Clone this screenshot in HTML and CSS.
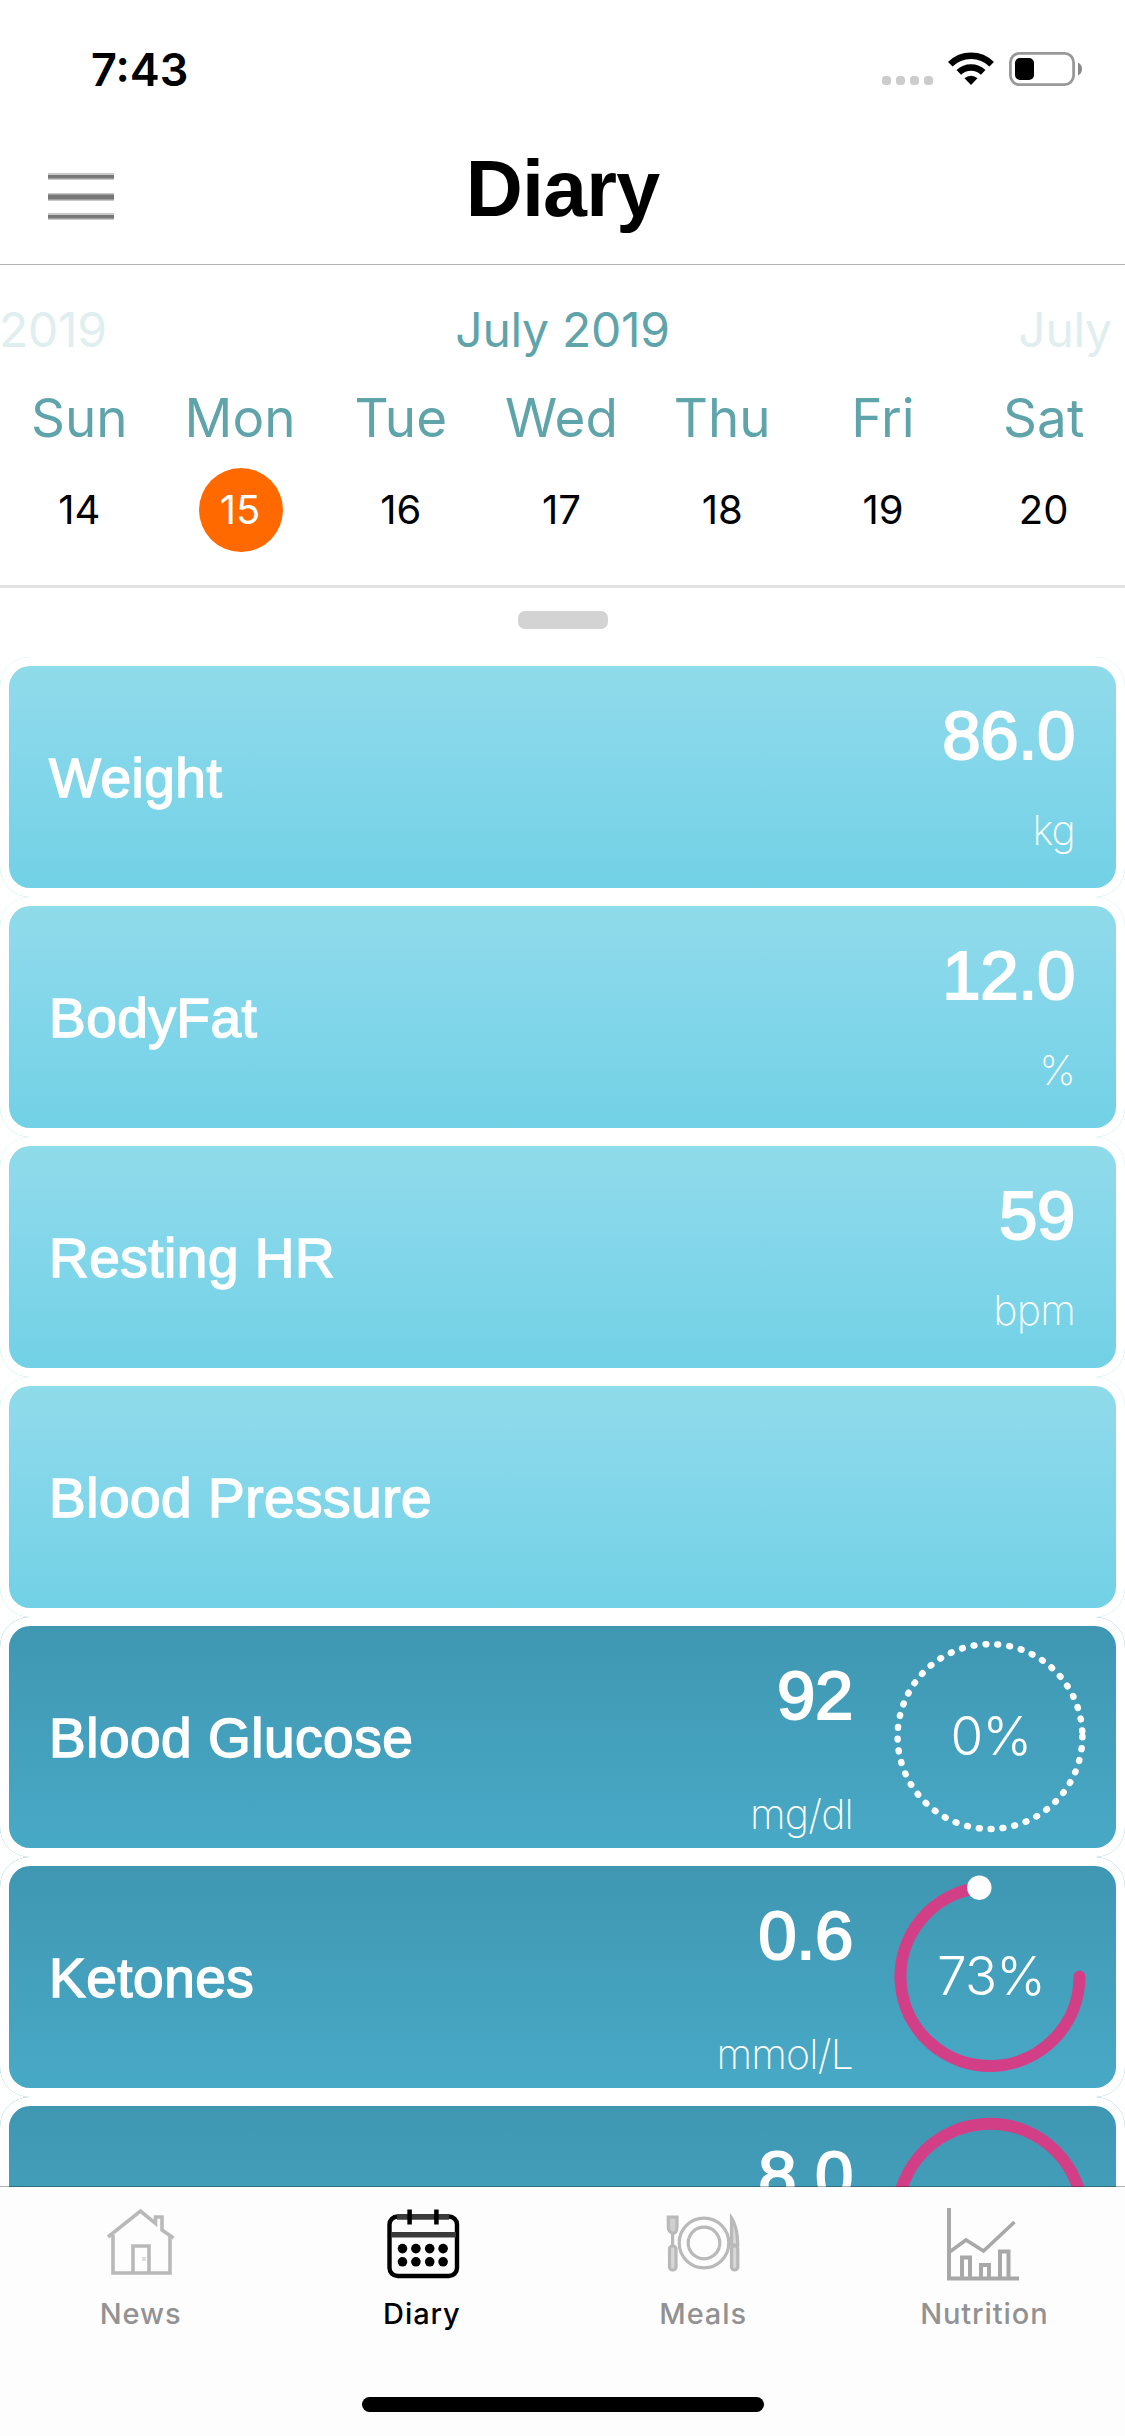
FILE: index.html
```
<!DOCTYPE html>
<html lang="en">
<head>
  <meta charset="UTF-8">
  <title>Diary</title>
  <link rel="stylesheet" href="styles.css">
</head>
<body>
  <div class="phone">
    <div class="status-bar">
      <span class="time">7:43</span>
      <svg class="status-icons" width="204" height="40" viewBox="880 48 204 40">
        <g fill="#ccc">
          <rect x="882" y="76" width="9" height="9" rx="3.5" />
          <rect x="896" y="76" width="9" height="9" rx="3.5" />
          <rect x="910" y="76" width="9" height="9" rx="3.5" />
          <rect x="924" y="76" width="9" height="9" rx="3.5" />
        </g>
        <g fill="none" stroke="#000" stroke-width="6.5">
          <path d="M950.3 64.2a29.5 29.5 0 0 1 41.4 0" />
          <path d="M958.8 72.4a17.5 17.5 0 0 1 24.4 0" />
        </g>
        <path d="M964.5 78.3a9.4 9.4 0 0 1 13 0L971 85z" />
        <rect x="1010.4" y="53.4" width="63.2" height="31.2" rx="9" fill="none" stroke="#999" stroke-width="2.8" />
        <rect x="1015" y="58" width="19" height="22" rx="5" />
        <path d="M1078 62.5q4 2 4 6.500t-4 6.500z" fill="#888" />
      </svg>
    </div>

    <div class="header">
      <svg class="menu-icon" width="66" height="50" viewBox="0 0 66 50">
        <g fill="#c9c9c9">
          <rect y="2" width="66" height="7" />
          <rect y="22" width="66" height="8" />
          <rect y="42" width="66" height="7" />
        </g>
        <g fill="#777">
          <rect y="4" width="66" height="3.500" />
          <rect y="23.500" width="66" height="5" />
          <rect y="44" width="66" height="3.500" />
        </g>
      </svg>
      <h1>Diary</h1>
    </div>

    <div class="calendar">
      <div class="months">
        <span class="month faded">July 2019</span>
        <span class="month">July 2019</span>
        <span class="month faded">July 2019</span>
      </div>
      <div class="week">
        <div class="day"><p class="day-name">Sun</p><p class="day-number">14</p></div>
        <div class="day"><p class="day-name">Mon</p><p class="day-number selected">15</p></div>
        <div class="day"><p class="day-name">Tue</p><p class="day-number">16</p></div>
        <div class="day"><p class="day-name">Wed</p><p class="day-number">17</p></div>
        <div class="day"><p class="day-name">Thu</p><p class="day-number">18</p></div>
        <div class="day"><p class="day-name">Fri</p><p class="day-number">19</p></div>
        <div class="day"><p class="day-name">Sat</p><p class="day-number">20</p></div>
      </div>
    </div>
    <div class="handle"></div>

    <div class="list">
      <div class="card">
        <h2>Weight</h2>
        <div class="reading"><p class="value">86.0</p><p class="unit">kg</p></div>
      </div>
      <div class="card">
        <h2>BodyFat</h2>
        <div class="reading"><p class="value">12.0</p><p class="unit">%</p></div>
      </div>
      <div class="card">
        <h2>Resting HR</h2>
        <div class="reading"><p class="value">59</p><p class="unit">bpm</p></div>
      </div>
      <div class="card">
        <h2>Blood Pressure</h2>
      </div>
      <div class="card dark">
        <h2>Blood Glucose</h2>
        <div class="reading"><p class="value">92</p><p class="unit">mg/dl</p></div>
        <svg class="ring" width="200" height="222" viewBox="0 0 200 222">
          <circle class="ring-dots" cx="100" cy="110.500" r="92.400" />
          <text x="101" y="129">0%</text>
        </svg>
      </div>
      <div class="card dark">
        <h2>Ketones</h2>
        <div class="reading"><p class="value">0.6</p><p class="unit">mmol/L</p></div>
        <svg class="ring" width="200" height="222" viewBox="0 0 200 222">
          <path class="ring-line" d="M189.500 110.500A89.500 89.500 0 1 1 88.800 21.700" />
          <circle cx="89.300" cy="21.700" r="12.200" fill="#fff" />
          <text x="101" y="129">73%</text>
        </svg>
      </div>
      <div class="card dark">
        <h2></h2>
        <div class="reading"><p class="value">8.0</p></div>
        <svg class="ring" width="200" height="222" viewBox="0 0 200 222">
          <circle class="ring-line" cx="100" cy="110.500" r="92.800" />
        </svg>
      </div>
    </div>

    <div class="tab-bar">
      <div class="tabs">
        <div class="tab">
          <svg width="76" height="76" viewBox="103 2206 76 76" fill="none" stroke="#b9b9b9" stroke-width="3.600">
            <path d="M108 2237l32.500-26 15 12.500v-6.500h6.500v13l11.500 8" />
            <path d="M113 2235v38h57v-38M133 2273v-27h16v27" />
            <path d="M144 2257v4" stroke="#dcdcdc" />
          </svg>
          <span>News</span>
        </div>
        <div class="tab active">
          <svg width="76" height="76" viewBox="384 2206 76 76" fill="none" stroke="#000">
            <rect x="389.500" y="2216.500" width="67.500" height="59.500" rx="8" stroke-width="4.400" />
            <path d="M397 2217h52M391 2234.800h65" stroke="#3a3a3a" stroke-width="5.500" />
            <path d="M409.600 2209.500v15M436.400 2209.500v15" stroke-width="4.500" />
            <g fill="#000" stroke="none">
              <circle cx="402.500" cy="2248.600" r="4.800" />
              <circle cx="415.900" cy="2248.600" r="4.800" />
              <circle cx="429.700" cy="2248.600" r="4.800" />
              <circle cx="443.100" cy="2248.600" r="4.800" />
              <circle cx="402.500" cy="2261.800" r="4.800" />
              <circle cx="415.900" cy="2261.800" r="4.800" />
              <circle cx="429.700" cy="2261.800" r="4.800" />
              <circle cx="443.100" cy="2261.800" r="4.800" />
            </g>
          </svg>
          <span>Diary</span>
        </div>
        <div class="tab">
          <svg width="76" height="76" viewBox="665 2206 76 76" fill="none" stroke="#b9b9b9" stroke-width="3.200">
            <circle cx="704" cy="2243" r="24.800" />
            <circle cx="704" cy="2243" r="15.800" />
            <path d="M668.300 2217v10q0 5 4.200 6t4.500-6v-10z" fill="#cfcfcf" />
            <path d="M672.600 2234v12" />
            <rect x="669.500" y="2246" width="6.500" height="24" rx="3" fill="#d8d8d8" />
            <path d="M731.500 2245v-27q6 9 6.300 27z" fill="#d8d8d8" />
            <rect x="731.500" y="2246" width="6.300" height="24" rx="3" fill="#d8d8d8" />
          </svg>
          <span>Meals</span>
        </div>
        <div class="tab">
          <svg width="76" height="76" viewBox="946 2206 76 76" fill="none" stroke="#a8a8a8" stroke-width="4">
            <path d="M949 2208v70.500h70" />
            <path d="M949.500 2252l16.500-12 17.500 11 31-29" stroke-width="3.600" />
            <path d="M962 2278v-20.500h8v20.500M981 2278v-13h8v13M1000 2278v-26.500h8.500v26.500" />
          </svg>
          <span>Nutrition</span>
        </div>
      </div>
      <div class="home-indicator"></div>
    </div>
  </div>
</body>
</html>
```
FILE: styles.css
```
* {
  box-sizing: border-box;
  margin: 0;
  padding: 0;
}

body {
  background: #fff;
  font-family: Inter, "Liberation Sans", sans-serif;
}

.phone {
  width: 1125px;
  height: 2436px;
  display: flex;
  flex-direction: column;
  overflow: hidden;
}

.status-bar {
  height: 132px;
  display: flex;
  justify-content: space-between;
  align-items: flex-start;
  padding: 48px 41px 0 91px;
}

.time {
  font-size: 45px;
  font-weight: 600;
  line-height: 43px;
}

.header {
  height: 133px;
  display: grid;
  grid-template-columns: 66px 1fr 66px;
  padding: 0 48px;
  border-bottom: 1px solid #b2b2b2;
}

.menu-icon {
  margin-top: 39px;
}

h1 {
  font-family: "Liberation Sans", sans-serif;
  font-size: 79px;
  line-height: 113px;
  letter-spacing: -0.8px;
  text-align: center;
}

.calendar {
  height: 323px;
  padding-top: 35px;
  border-bottom: 3px solid #e2e2e2;
}

.months {
  display: flex;
  justify-content: center;
}

.month {
  flex: none;
  width: 563px;
  text-align: center;
  color: #5fa4aa;
  font-size: 48px;
  line-height: 60px;
  letter-spacing: -0.3px;
}

.faded {
  color: #dfeeee;
}

.week {
  display: flex;
}

.day {
  flex: 1;
  display: flex;
  flex-direction: column;
  align-items: center;
}

.day-name {
  margin-top: 22px;
  padding-right: 2px;
  color: #5fa4aa;
  font-size: 53px;
  line-height: 72px;
}

.day-number {
  margin-top: 14px;
  width: 84px;
  height: 84px;
  padding-right: 2px;
  border-radius: 50%;
  text-align: center;
  font-size: 40px;
  line-height: 83px;
}

.selected {
  background: #ff6900;
  color: white;
}

.handle {
  width: 90px;
  height: 18px;
  margin: 23px auto 28px;
  border-radius: 7px;
  background: #d3d3d3;
  flex: none;
}

.list {
  flex: 1;
  min-height: 0;
  overflow: hidden;
}

.card {
  height: 240px;
  display: flex;
  border-radius: 30px;
  background: linear-gradient(#8fdbe9 9px, #8bd9eb 50px, #72d1e6 231px);
  box-shadow: inset 0 0 0 9px white;
  color: white;
  padding: 9px 50px 9px 49px;
}

.dark {
  background: linear-gradient(#3f97b2 9px, #48a9c6 231px);
  padding-right: 36px;
}

h2 {
  flex: 1;
  font-family: "Liberation Sans", sans-serif;
  font-weight: 400;
  font-size: 55px;
  line-height: 225px;
  letter-spacing: 0.5px;
  -webkit-text-stroke: 1.5px white;
}

.reading {
  text-align: right;
}

.value {
  margin-top: 30px;
  font-family: "Liberation Sans", sans-serif;
  font-size: 69px;
  line-height: 80px;
  letter-spacing: -0.4px;
  -webkit-text-stroke: 2px white;
}

.unit {
  margin-top: 24px;
  font-weight: 250;
  font-size: 41px;
  line-height: 60px;
  letter-spacing: -0.8px;
}

.dark .unit {
  margin-top: 48px;
}

.ring {
  margin-left: 37px;
  margin-right: -1px;
  flex: none;
}

.ring text {
  fill: white;
  text-anchor: middle;
  font-size: 53px;
  font-weight: 360;
  letter-spacing: -0.8px;
}

.ring-dots {
  fill: none;
  stroke: white;
  stroke-width: 6.5;
  stroke-linecap: round;
  stroke-dasharray: 0.8 11.15;
}

.ring-line {
  fill: none;
  stroke: #d23f86;
  stroke-width: 12;
  stroke-linecap: round;
}

.tab-bar {
  position: relative;
  height: 250px;
  margin-top: -1px;
  border-top: 1px solid rgba(0, 0, 0, 0.3);
  background: #fdfdfd padding-box;
  flex: none;
}

.tabs {
  display: flex;
  padding-top: 19px;
}

.tab {
  flex: 1;
  display: flex;
  flex-direction: column;
  align-items: center;
  color: #929292;
  font-size: 29px;
  font-weight: 500;
  line-height: 40px;
  letter-spacing: 0.9px;
}

.tab span {
  margin-top: 12px;
}

.active {
  color: black;
}

.home-indicator {
  width: 402px;
  height: 15px;
  margin: 63px auto 0;
  border-radius: 8px;
  background: black;
}
```
